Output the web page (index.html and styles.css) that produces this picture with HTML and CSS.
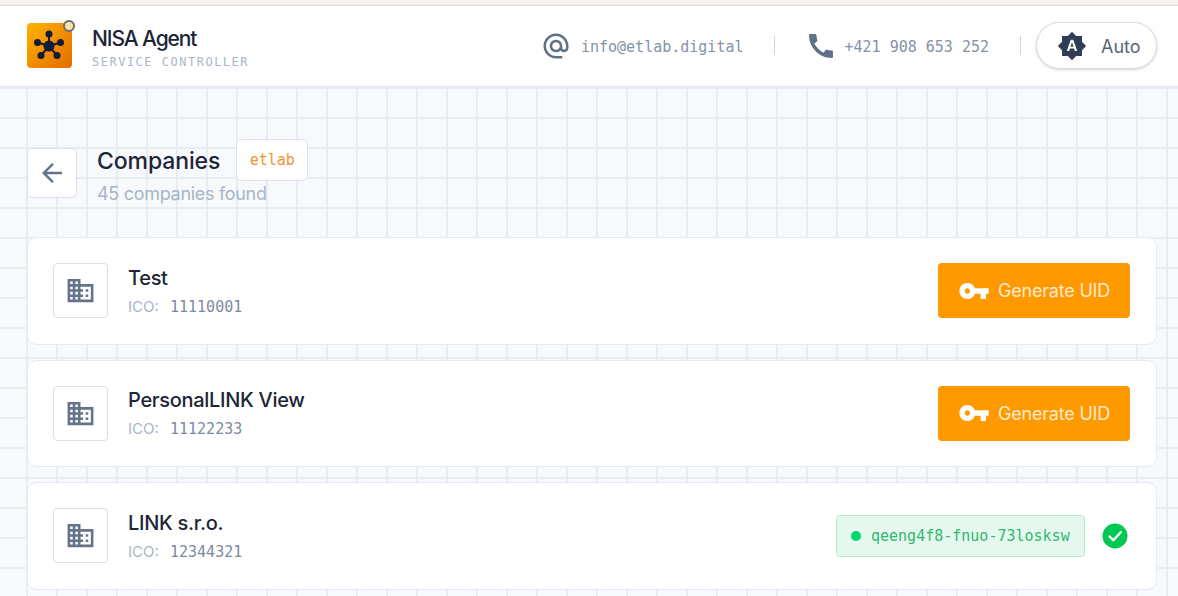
FILE: index.html
```html
<!DOCTYPE html>
<html lang="en">
<head>
    <meta charset="UTF-8">
    <meta name="viewport" content="width=device-width, initial-scale=1.0">
    <title>NISA Agent</title>
    <link rel="stylesheet" href="styles.css">
</head>
<body>
    <div class="top-strip"></div>

    <!-- Header -->
    <header class="header">
        <div class="brand">
            <div class="logo">
                <svg viewBox="0 0 45 45" width="45" height="45">
                    <g fill="#131c36" stroke="#131c36" stroke-width="2">
                        <path d="M22 11 V23 M10.500 19.500 L22 23 M33.500 19.500 L22 23 M14 32.500 L22 23 M30 32.500 L22 23" fill="none"/>
                        <circle cx="22" cy="23" r="4.500"/>
                        <circle cx="22" cy="11" r="2.500"/>
                        <circle cx="10.500" cy="19.500" r="2.500"/>
                        <circle cx="33.500" cy="19.500" r="2.500"/>
                        <circle cx="14" cy="32.500" r="2.500"/>
                        <circle cx="30" cy="32.500" r="2.500"/>
                    </g>
                </svg>
                <span class="logo-dot"></span>
            </div>
            <div class="brand-text">
                <span class="brand-name">NISA Agent</span>
                <span class="brand-sub">SERVICE CONTROLLER</span>
            </div>
        </div>
        <div class="contacts">
            <svg class="contact-icon" viewBox="0 0 24 24"><path d="M12 2C6.480 2 2 6.480 2 12s4.480 10 10 10h5v-2h-5c-4.340 0-8-3.660-8-8s3.660-8 8-8 8 3.660 8 8v1.430c0 .79-.71 1.570-1.500 1.570s-1.500-.78-1.500-1.570V12c0-2.760-2.240-5-5-5s-5 2.240-5 5 2.240 5 5 5c1.380 0 2.640-.56 3.540-1.470.65.89 1.770 1.470 2.960 1.470 1.970 0 3.500-1.600 3.500-3.570V12c0-5.520-4.480-10-10-10zm0 13c-1.660 0-3-1.340-3-3s1.340-3 3-3 3 1.340 3 3-1.340 3-3 3z"/></svg>
            <span class="contact-text">info@etlab.digital</span>
            <span class="divider"></span>
            <svg class="contact-icon phone-icon" viewBox="0 0 24 24"><path d="M20.010 15.380c-1.230 0-2.420-.2-3.530-.56-.35-.12-.74-.03-1.010.24l-1.570 1.970c-2.830-1.350-5.480-3.900-6.890-6.830l1.950-1.660c.27-.28.35-.67.24-1.020-.37-1.110-.56-2.300-.56-3.530 0-.54-.45-.99-.99-.99H4.190C3.650 3 3 3.240 3 3.990 3 13.280 10.730 21 20.010 21c.71 0 .99-.63.99-1.180v-3.450c0-.54-.45-.99-.99-.99z"/></svg>
            <span class="contact-text">+421 908 653 252</span>
            <span class="divider divider-last"></span>
            <div class="theme-toggle">
                <svg class="theme-icon" viewBox="0 0 24 24"><path d="M10.850 12.650h2.300L12 9l-1.150 3.650zM20 8.690V4h-4.690L12 .69 8.690 4H4v4.690L.69 12 4 15.310V20h4.690L12 23.310 15.310 20H20v-4.690L23.310 12 20 8.690zM14.300 16l-.7-2h-3.200l-.7 2H7.800L11 7h2l3.200 9h-1.900z"/></svg>
                <span>Auto</span>
            </div>
        </div>
    </header>

    <main class="content">
        <!-- Page title -->
        <div class="page-head">
            <button class="back-btn">
                <svg viewBox="0 0 24 24" width="30" height="30"><path d="M20 11H7.830l5.590-5.590L12 4l-8 8 8 8 1.410-1.410L7.830 13H20v-2z"/></svg>
            </button>
            <div class="page-titles">
                <div class="title-row">
                    <h1 class="page-title">Companies</h1>
                    <span class="tag">etlab</span>
                </div>
                <div class="page-sub">45 companies found</div>
            </div>
        </div>

        <!-- Companies -->
        <div class="company-list">
            <div class="company-card">
                <div class="company-icon">
                    <svg viewBox="0 0 24 24"><path d="M12 7V3H2v18h20V7H12zM6 19H4v-2h2v2zm0-4H4v-2h2v2zm0-4H4V9h2v2zm0-4H4V5h2v2zm4 12H8v-2h2v2zm0-4H8v-2h2v2zm0-4H8V9h2v2zm0-4H8V5h2v2zm10 12h-8v-2h2v-2h-2v-2h2v-2h-2V9h8v10zm-2-8h-2v2h2v-2zm0 4h-2v2h2v-2z"/></svg>
                </div>
                <div class="company-info">
                    <div class="company-name">Test</div>
                    <div class="company-ico">ICO: <span class="ico-value">11110001</span></div>
                </div>
                <button class="generate-btn">
                    <svg viewBox="0 0 24 24"><path d="M12.650 10C11.830 7.670 9.610 6 7 6c-3.310 0-6 2.690-6 6s2.690 6 6 6c2.610 0 4.830-1.670 5.650-4H17v4h4v-4h2v-4H12.650zM7 14c-1.100 0-2-.9-2-2s.9-2 2-2 2 .9 2 2-.9 2-2 2z"/></svg>
                    Generate UID
                </button>
            </div>
            <div class="company-card">
                <div class="company-icon">
                    <svg viewBox="0 0 24 24"><path d="M12 7V3H2v18h20V7H12zM6 19H4v-2h2v2zm0-4H4v-2h2v2zm0-4H4V9h2v2zm0-4H4V5h2v2zm4 12H8v-2h2v2zm0-4H8v-2h2v2zm0-4H8V9h2v2zm0-4H8V5h2v2zm10 12h-8v-2h2v-2h-2v-2h2v-2h-2V9h8v10zm-2-8h-2v2h2v-2zm0 4h-2v2h2v-2z"/></svg>
                </div>
                <div class="company-info">
                    <div class="company-name">PersonalLINK View</div>
                    <div class="company-ico">ICO: <span class="ico-value">11122233</span></div>
                </div>
                <button class="generate-btn">
                    <svg viewBox="0 0 24 24"><path d="M12.650 10C11.830 7.670 9.610 6 7 6c-3.310 0-6 2.690-6 6s2.690 6 6 6c2.610 0 4.830-1.670 5.650-4H17v4h4v-4h2v-4H12.650zM7 14c-1.100 0-2-.9-2-2s.9-2 2-2 2 .9 2 2-.9 2-2 2z"/></svg>
                    Generate UID
                </button>
            </div>
            <div class="company-card">
                <div class="company-icon">
                    <svg viewBox="0 0 24 24"><path d="M12 7V3H2v18h20V7H12zM6 19H4v-2h2v2zm0-4H4v-2h2v2zm0-4H4V9h2v2zm0-4H4V5h2v2zm4 12H8v-2h2v2zm0-4H8v-2h2v2zm0-4H8V9h2v2zm0-4H8V5h2v2zm10 12h-8v-2h2v-2h-2v-2h2v-2h-2V9h8v10zm-2-8h-2v2h2v-2zm0 4h-2v2h2v-2z"/></svg>
                </div>
                <div class="company-info">
                    <div class="company-name">LINK s.r.o.</div>
                    <div class="company-ico">ICO: <span class="ico-value">12344321</span></div>
                </div>
                <div class="uid-badge"><span class="uid-dot"></span>qeeng4f8-fnuo-73losksw</div>
                <svg class="uid-check" viewBox="0 0 26 26">
                    <circle cx="13" cy="13" r="12.500" fill="#00c853"/>
                    <path d="M7.500 13.500 L11.300 17.200 L18.800 9.200" fill="none" stroke="#fff" stroke-width="2.400" stroke-linecap="round" stroke-linejoin="round"/>
                </svg>
            </div>
        </div>
    </main>
</body>
</html>
```
FILE: styles.css
```css
/* General */
* {
    box-sizing: border-box;
}

body {
    margin: 0;
    height: 596px;
    overflow: hidden;
    font-family: Inter, "Noto Sans", sans-serif;
    background-color: #f8f9fc;
    background-image:
        linear-gradient(to right, #e8ecf3 2px, transparent 2px),
        linear-gradient(to bottom, #e8ecf3 2px, transparent 2px);
    background-size: 30px 30px;
    background-position: 26px 27px;
}

.top-strip {
    height: 6px;
    background-color: #f5f3f0;
    border-bottom: 1px solid #e2dcd8;
}

/* Header */
.header {
    display: flex;
    align-items: center;
    justify-content: space-between;
    height: 82px;
    padding: 0 21px 1px 27px;
    background-color: #fff;
    border-bottom: 2px solid #e6ebf3;
}

.brand {
    display: flex;
    align-items: center;
    gap: 20px;
}

.logo {
    position: relative;
    width: 45px;
    height: 45px;
    border-radius: 4px;
    background: linear-gradient(135deg, #ffb300, #e26c00);
}

.logo svg {
    display: block;
}

.logo-dot {
    position: absolute;
    top: -3px;
    right: -3px;
    width: 12px;
    height: 12px;
    border-radius: 50%;
    background-color: #fde2a8;
    border: 2px solid #666b75;
}

.brand-text {
    display: flex;
    flex-direction: column;
    gap: 3px;
    padding-top: 3px;
}

.brand-name {
    font-size: 21px;
    line-height: 26px;
    font-weight: 500;
    letter-spacing: -1.1px;
    color: #1d2536;
}

.brand-sub {
    font-family: "DejaVu Sans Mono", monospace;
    font-size: 12px;
    line-height: 14px;
    letter-spacing: 1.5px;
    color: #aab6c8;
}

.contacts {
    display: flex;
    align-items: center;
}

.contact-icon {
    width: 30px;
    height: 30px;
    margin-right: 10px;
    fill: #5f7089;
}

.phone-icon {
    width: 32px;
    height: 32px;
    margin-right: 8px;
}

.contact-text {
    padding-top: 2px;
    font-family: "DejaVu Sans Mono", monospace;
    font-size: 15px;
    color: #8592a6;
}

.divider {
    width: 1px;
    height: 19px;
    margin: 0 30px 0 30px;
    background-color: #cdd6e3;
}

.divider-last {
    margin: 0 15px 0 31px;
}

.theme-toggle {
    display: flex;
    align-items: center;
    gap: 14px;
    width: 121px;
    height: 47px;
    padding-left: 20px;
    border: 1px solid #d8dbe1;
    border-radius: 24px;
    background-color: #fff;
    box-shadow: 0 1px 3px rgba(60, 70, 90, 0.22);
    font-size: 18px;
    color: #5b6472;
}

.theme-toggle span {
    padding-top: 2px;
}

.theme-icon {
    width: 30px;
    height: 30px;
    fill: #2f3d56;
}

/* Page title */
.content {
    padding: 50px 21px 0 27px;
}

.page-head {
    display: flex;
    gap: 20px;
    align-items: flex-start;
}

.back-btn {
    display: flex;
    align-items: center;
    justify-content: center;
    width: 50px;
    height: 50px;
    margin-top: 10px;
    padding: 0;
    background-color: #fff;
    border: 1px solid #dbe2ec;
    border-radius: 5px;
}

.back-btn svg {
    fill: #64748b;
}

.title-row {
    display: flex;
    align-items: center;
    gap: 16px;
}

.page-title {
    margin: 0;
    padding-top: 2px;
    font-size: 23px;
    line-height: 42px;
    font-weight: 500;
    letter-spacing: -0.1px;
    color: #1d2536;
}

.tag {
    display: flex;
    align-items: center;
    justify-content: center;
    width: 72px;
    height: 42px;
    background-color: #fff;
    border: 1px solid #dbe2ec;
    border-radius: 5px;
    font-family: "DejaVu Sans Mono", monospace;
    font-size: 15px;
    color: #ef9234;
}

.page-sub {
    font-size: 18px;
    line-height: 24px;
    letter-spacing: -0.3px;
    color: #a9b5c6;
}

/* Companies */
.company-list {
    display: flex;
    flex-direction: column;
    gap: 15px;
    margin-top: 31px;
}

.company-card {
    display: flex;
    align-items: center;
    height: 107.5px;
    padding: 0 26px 0 25px;
    background-color: #fff;
    border: 1px solid #e6ebf2;
    border-radius: 10px;
}

.company-icon {
    display: flex;
    align-items: center;
    justify-content: center;
    flex-shrink: 0;
    width: 55px;
    height: 55px;
    background-color: #fff;
    border: 1px solid #d8e0ea;
    border-radius: 4px;
}

.company-icon svg {
    width: 31px;
    height: 31px;
    fill: #64748b;
}

.company-info {
    flex: 1;
    margin-left: 20px;
}

.company-name {
    font-size: 20px;
    line-height: 26px;
    font-weight: 500;
    letter-spacing: -0.3px;
    color: #1d2536;
}

.company-ico {
    margin-top: 6px;
    font-size: 15px;
    line-height: 20px;
    color: #a9b5c6;
}

.ico-value {
    margin-left: 7px;
    font-family: "DejaVu Sans Mono", monospace;
    font-size: 15px;
    color: #7c8aa0;
}

.generate-btn {
    display: flex;
    align-items: center;
    justify-content: center;
    gap: 8px;
    width: 192px;
    height: 55px;
    padding: 0;
    background-color: #ff9900;
    border: none;
    border-radius: 4px;
    font-family: Inter, "Noto Sans", sans-serif;
    font-size: 18px;
    letter-spacing: -0.2px;
    color: #ffe9cc;
}

.generate-btn svg {
    width: 32px;
    height: 32px;
    fill: #fff;
}

.uid-badge {
    display: flex;
    align-items: center;
    gap: 10px;
    width: 249px;
    height: 42px;
    padding-left: 14px;
    background-color: #e6f8ee;
    border: 1px solid #b5eccc;
    border-radius: 4px;
    font-family: "DejaVu Sans Mono", monospace;
    font-size: 15px;
    color: #2eb872;
}

.uid-dot {
    width: 10px;
    height: 10px;
    border-radius: 50%;
    background-color: #00d76a;
}

.uid-check {
    width: 26px;
    height: 26px;
    margin-left: 17px;
    margin-right: 2px;
}
```
